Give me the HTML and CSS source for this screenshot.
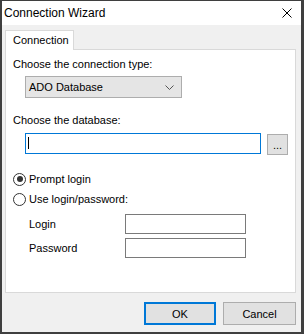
FILE: index.html
```html
<!DOCTYPE html>
<html lang="en">
<head>
    <meta charset="UTF-8">
    <title>Connection Wizard</title>
    <link rel="stylesheet" href="styles.css">
</head>
<body>
    <div class="window">
        <!-- 타이틀 바 -->
        <div class="titlebar">
            <span class="title">Connection Wizard</span>
            <svg class="close" width="10" height="10" viewBox="0 0 10 10">
                <path d="M0.5 0.5 L9.5 9.5 M9.5 0.5 L0.5 9.5" stroke="#000" stroke-width="1" fill="none"/>
            </svg>
        </div>

        <div class="body">
            <div class="tabs">
                <div class="tab">Connection</div>
            </div>

            <div class="panel">
                <div class="label">Choose the connection type:</div>
                <div class="combo">
                    <span>ADO Database</span>
                    <svg width="9" height="5" viewBox="0 0 9 5">
                        <path d="M0.5 0.5 L4.5 4.5 L8.5 0.5" stroke="#555" stroke-width="1" fill="none"/>
                    </svg>
                </div>

                <div class="label gap-top">Choose the database:</div>
                <div class="db-row">
                    <div class="textbox focused"><span class="caret"></span></div>
                    <button class="browse">...</button>
                </div>

                <div class="radios">
                    <label class="radio"><span class="dot checked"></span>Prompt login</label>
                    <label class="radio"><span class="dot"></span>Use login/password:</label>
                </div>

                <div class="creds">
                    <div class="cred-row">
                        <span class="cred-label">Login</span>
                        <div class="textbox small"></div>
                    </div>
                    <div class="cred-row">
                        <span class="cred-label">Password</span>
                        <div class="textbox small"></div>
                    </div>
                </div>
            </div>

            <div class="buttons">
                <button class="btn default">OK</button>
                <button class="btn">Cancel</button>
            </div>
        </div>
    </div>
</body>
</html>
```

FILE: styles.css
```css
body {
    margin: 0;
    font-family: "Segoe UI", "Liberation Sans", Arial, sans-serif;
    font-size: 11px;
    color: #000;
}

.window {
    width: 304px;
    height: 334px;
    box-sizing: border-box;
    border: 1px solid #3f3f3f;
    border-left-width: 2px;
    border-right-width: 3px;
    border-bottom-width: 2px;
    display: flex;
    flex-direction: column;
    background: #f0f0f0;
}

/* 타이틀 바 */
.titlebar {
    height: 24px;
    background: #fff;
    display: flex;
    align-items: center;
    padding-left: 2px;
    padding-right: 9px;
}
.title {
    flex: 1;
    font-size: 12px;
    line-height: 16px;
}
.close {
    display: block;
}

.body {
    flex: 1;
    padding: 5px 0 0 3px;
}

/* 탭 */
.tabs {
    display: flex;
}
.tab {
    width: 69px;
    height: 20px;
    box-sizing: border-box;
    border: 1px solid #d9d9d9;
    border-bottom: none;
    background: #fff;
    padding-left: 7px;
    line-height: 19px;
    margin-bottom: -1px;
    position: relative;
    z-index: 1;
}

/* 패널 */
.panel {
    width: 291px;
    height: 244px;
    box-sizing: border-box;
    border: 1px solid #d9d9d9;
    background: #fff;
    padding: 6px 0 0 7px;
}
.label {
    line-height: 16px;
}
.gap-top {
    margin-top: 14px;
}

.combo {
    width: 157px;
    height: 22px;
    box-sizing: border-box;
    margin: 4px 0 0 12px;
    border: 1px solid #adadad;
    background: #e5e5e5;
    display: flex;
    align-items: center;
    justify-content: space-between;
    padding: 0 7px 0 3px;
}
.combo svg {
    display: block;
}

.db-row {
    display: flex;
    align-items: flex-start;
    gap: 6px;
    margin: 5px 0 0 12px;
}
.textbox {
    box-sizing: border-box;
    border: 1px solid #7a7a7a;
    background: #fff;
}
.textbox.focused {
    width: 236px;
    height: 21px;
    border-color: #0078d7;
    padding: 3px 0 0 2px;
}
.caret {
    display: block;
    width: 1px;
    height: 12px;
    background: #000;
}
.browse {
    width: 21px;
    height: 21px;
    margin-top: 1px;
    box-sizing: border-box;
    border: 1px solid #adadad;
    background: #e1e1e1;
    font-family: inherit;
    font-size: 11px;
    line-height: 14px;
    padding: 1px 0 0;
}

/* 라디오 */
.radios {
    display: flex;
    flex-direction: column;
    gap: 4px;
    margin-top: 16px;
}
.radio {
    display: flex;
    align-items: center;
    gap: 3px;
    line-height: 16px;
}
.dot {
    width: 13px;
    height: 13px;
    box-sizing: border-box;
    border: 1px solid #333;
    border-radius: 50%;
    background: #fff;
    display: flex;
    align-items: center;
    justify-content: center;
}
.dot.checked::after {
    content: "";
    width: 6px;
    height: 6px;
    border-radius: 50%;
    background: #333;
}

.creds {
    display: flex;
    flex-direction: column;
    gap: 4px;
    margin: 7px 0 0 16px;
}
.cred-row {
    display: flex;
    align-items: center;
}
.cred-label {
    width: 96px;
    line-height: 16px;
}
.textbox.small {
    width: 121px;
    height: 20px;
}

/* 하단 버튼 */
.buttons {
    display: flex;
    justify-content: flex-end;
    gap: 7px;
    padding-right: 5px;
    margin-top: 9px;
}
.btn {
    width: 73px;
    height: 23px;
    box-sizing: border-box;
    border: 1px solid #adadad;
    background: #e1e1e1;
    font-family: inherit;
    font-size: 11px;
    color: #000;
    padding: 0;
}
.btn.default {
    border: 2px solid #0078d7;
    width: 72px;
}
```
